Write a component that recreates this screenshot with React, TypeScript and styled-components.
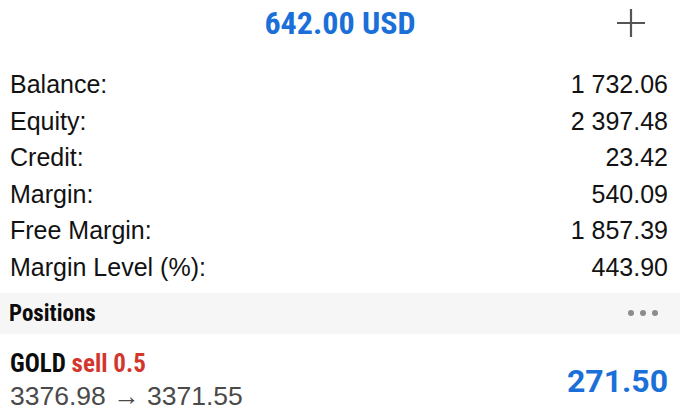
import React from 'react';
import styled, { createGlobalStyle } from 'styled-components';

const GlobalStyle = createGlobalStyle`
  html, body {
    margin: 0;
    padding: 0;
    background: #ffffff;
  }
  body {
    font-family: 'Liberation Sans', Arial, sans-serif;
    color: #111111;
    overflow: hidden;
  }
`;

const condensed = `'Liberation Sans Narrow', 'Roboto Condensed', 'DejaVu Sans Condensed', 'Liberation Sans', sans-serif`;

const Screen = styled.div`
  width: 680px;
  height: 411px;
  display: flex;
  flex-direction: column;
  overflow: hidden;
`;

const TopBar = styled.header`
  height: 46px;
  display: grid;
  grid-template-columns: 60px 1fr 60px;
  align-items: center;
`;

const Title = styled.h1`
  grid-column: 2;
  margin: 0;
  text-align: center;
  font-family: ${condensed};
  font-weight: 700;
  font-size: 32px;
  color: #1b6fd8;
`;

const AddButton = styled.button`
  grid-column: 3;
  justify-self: end;
  margin-right: 34px;
  width: 30px;
  height: 30px;
  padding: 0;
  border: none;
  background: none;
  display: flex;
  align-items: center;
  justify-content: center;
`;

const StatsList = styled.div`
  padding: 21px 12px 7px 10px;
  display: flex;
  flex-direction: column;
`;

const StatRow = styled.div`
  height: 36.6px;
  display: flex;
  align-items: center;
  justify-content: space-between;
  font-size: 25px;
  color: #121212;
`;

const SectionBar = styled.div`
  height: 42px;
  background: #f6f6f6;
  display: flex;
  align-items: center;
  justify-content: space-between;
  padding: 0 22px 0 9px;
`;

const SectionTitle = styled.span`
  font-family: ${condensed};
  font-weight: 700;
  font-size: 23px;
  color: #0c0c0c;
`;

const Dots = styled.div`
  display: flex;
  gap: 6px;
`;

const Dot = styled.span`
  width: 6px;
  height: 6px;
  border-radius: 50%;
  background: #8c8c8c;
`;

const PositionRow = styled.div`
  display: flex;
  align-items: center;
  justify-content: space-between;
  padding: 16px 12px 0 10px;
`;

const PositionInfo = styled.div`
  display: flex;
  flex-direction: column;
  gap: 3px;
`;

const Symbol = styled.div`
  font-family: ${condensed};
  font-weight: 700;
  font-size: 25px;
  line-height: 28px;
  color: #0c0c0c;
`;

const Side = styled.span<{ $type: 'buy' | 'sell' }>`
  color: ${(p) => (p.$type === 'sell' ? '#d2362d' : '#1b6fd8')};
`;

const Prices = styled.div`
  font-size: 26.5px;
  line-height: 30px;
  color: #4a4a4a;
`;

const Profit = styled.div`
  font-family: 'Roboto', 'Liberation Sans', sans-serif;
  font-weight: 700;
  font-size: 32px;
  color: #1b6fd8;
  margin-top: 0;
`;

const stats = [
  { label: 'Balance:', value: '1 732.06' },
  { label: 'Equity:', value: '2 397.48' },
  { label: 'Credit:', value: '23.42' },
  { label: 'Margin:', value: '540.09' },
  { label: 'Free Margin:', value: '1 857.39' },
  { label: 'Margin Level (%):', value: '443.90' },
];

export default function App() {
  return (
    <Screen>
      <GlobalStyle />
      <TopBar>
        <Title>642.00 USD</Title>
        <AddButton aria-label="add">
          <svg width="30" height="30" viewBox="0 0 30 30">
            <path d="M15 1v28M1 15h28" stroke="#555" strokeWidth="2.2" fill="none" />
          </svg>
        </AddButton>
      </TopBar>
      <StatsList>
        {stats.map((s) => (
          <StatRow key={s.label}>
            <span>{s.label}</span>
            <span>{s.value}</span>
          </StatRow>
        ))}
      </StatsList>
      <SectionBar>
        <SectionTitle>Positions</SectionTitle>
        <Dots>
          <Dot />
          <Dot />
          <Dot />
        </Dots>
      </SectionBar>
      <PositionRow>
        <PositionInfo>
          <Symbol>
            GOLD <Side $type="sell">sell 0.5</Side>
          </Symbol>
          <Prices>3376.98 → 3371.55</Prices>
        </PositionInfo>
        <Profit>271.50</Profit>
      </PositionRow>
    </Screen>
  );
}
